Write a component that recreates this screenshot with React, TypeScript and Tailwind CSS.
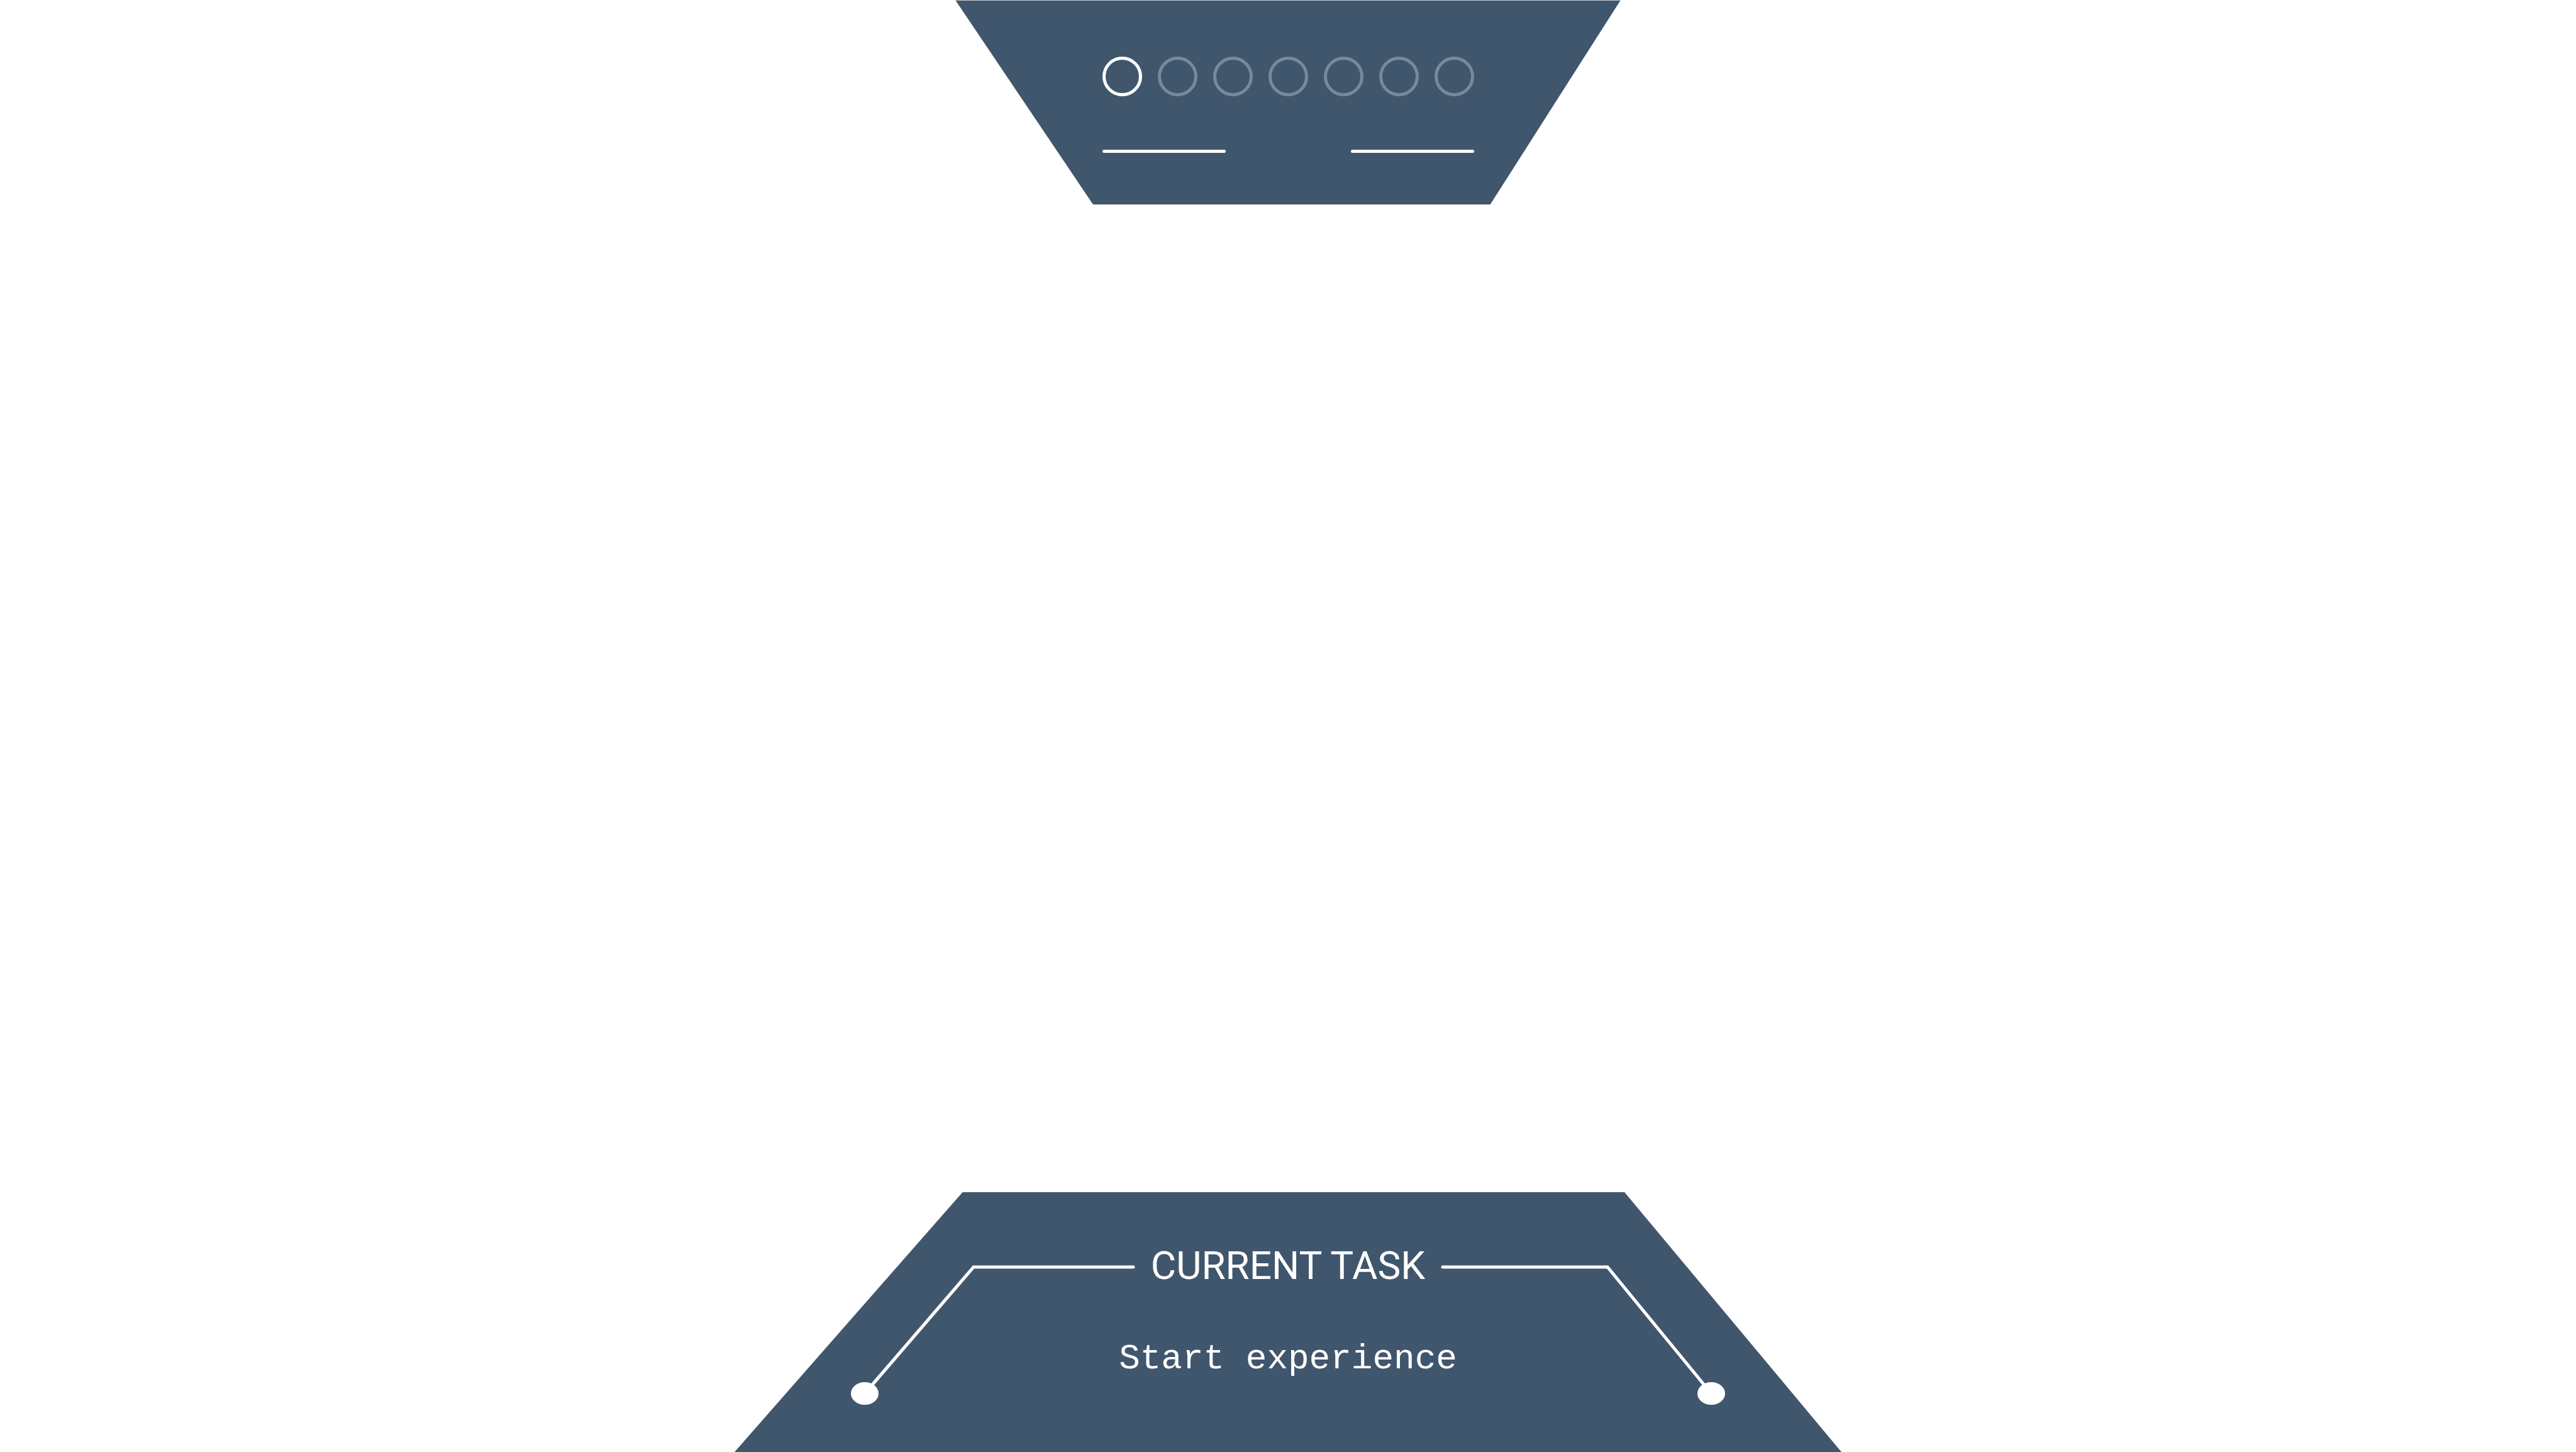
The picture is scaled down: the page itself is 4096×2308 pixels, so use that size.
const STEPS = [1, 2, 3, 4, 5, 6, 7];
const CURRENT_STEP = 1;

function ProgressHeader() {
  return (
    <header className="flex h-[325px] w-full max-w-[1058px] flex-col items-center border-t border-[#c3ccd3] bg-[#40566d] pt-[89px] [clip-path:polygon(0_0,100%_0,80.4%_100%,20.7%_100%)]">
      <div className="flex flex-col gap-[85px]">
        <ol className="flex gap-[25px]" aria-label="Progress">
          {STEPS.map((step) => (
            <li
              key={step}
              aria-label={`Step ${step}`}
              aria-current={step === CURRENT_STEP ? "step" : undefined}
              className={
                step === CURRENT_STEP
                  ? "size-[63px] rounded-full border-5 border-white"
                  : "size-[63px] rounded-full border-5 border-white/30"
              }
            />
          ))}
        </ol>
        <div className="flex justify-between">
          <span className="h-[5px] w-[196px] rounded-full bg-white" />
          <span className="h-[5px] w-[196px] rounded-full bg-white" />
        </div>
      </div>
    </header>
  );
}

function LeftConnector() {
  return (
    <svg
      className="mt-[30px] h-[226px] w-[453px] shrink-0"
      viewBox="0 0 453 226"
      fill="none"
      aria-hidden="true"
    >
      <path d="M450 4H196L23 205" stroke="white" strokeWidth="5" strokeLinecap="round" />
      <ellipse cx="23" cy="205" rx="22" ry="18" fill="white" />
    </svg>
  );
}

function RightConnector() {
  return (
    <svg
      className="mt-[30px] h-[226px] w-[453px] shrink-0"
      viewBox="0 0 453 226"
      fill="none"
      aria-hidden="true"
    >
      <path d="M3 4H265L430 205" stroke="white" strokeWidth="5" strokeLinecap="round" />
      <ellipse cx="430" cy="205" rx="22" ry="18" fill="white" />
    </svg>
  );
}

function TaskFooter() {
  return (
    <footer className="flex h-[413px] w-full max-w-[1760px] items-start bg-[#40566d] px-[184px] pt-[85px] text-white [clip-path:polygon(20.6%_0,80.4%_0,100%_100%,0_100%)]">
      <LeftConnector />
      <div className="flex min-w-0 flex-1 flex-col items-center gap-[84px] whitespace-nowrap">
        <h1 className="font-['Roboto',sans-serif] text-[62px] leading-[64px]">CURRENT TASK</h1>
        <p className="font-['Courier_New','Liberation_Mono',monospace] text-[56px] leading-[64px]">
          Start experience
        </p>
      </div>
      <RightConnector />
    </footer>
  );
}

export default function App() {
  return (
    <main className="flex min-h-screen flex-col items-center justify-between bg-white">
      <ProgressHeader />
      <TaskFooter />
    </main>
  );
}
